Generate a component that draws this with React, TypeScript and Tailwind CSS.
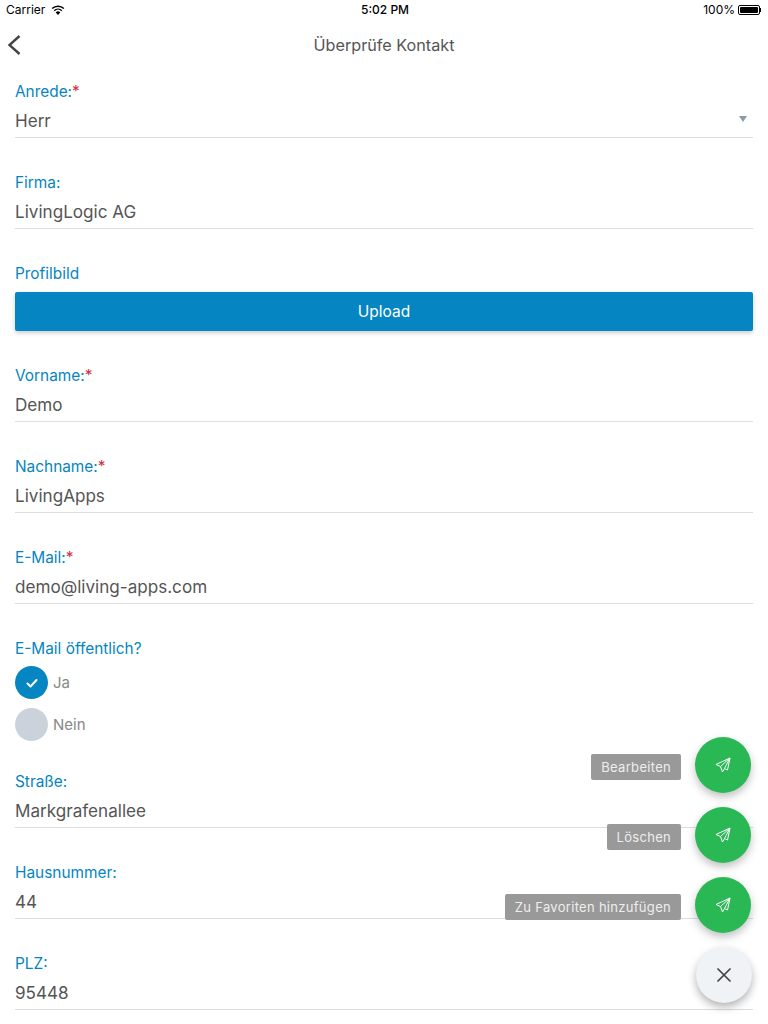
import { X } from 'lucide-react'

const font = { fontFamily: 'Inter, sans-serif' }

function Label({ text, required }: { text: string; required?: boolean }) {
  return (
    <div className="h-[20px] pt-[1px] text-[15.4px] leading-[20px] text-[#0585c1]">
      {text}
      {required && <span className="text-[#c8323c]">*</span>}
    </div>
  )
}

function Field({ label, value, required, select }: { label: string; value: string; required?: boolean; select?: boolean }) {
  return (
    <div className="h-[91px] pt-[11px]">
      <Label text={label} required={required} />
      <div className="flex h-[37px] items-center justify-between border-b border-[#dddddd] pt-[4px] text-[17.1px] text-[#555555]">
        <span>{value}</span>
        {select && <span className="mr-[6px] -mt-[4px] h-0 w-0 border-x-[4px] border-t-[6px] border-x-transparent border-t-[#8e99ab]" />}
      </div>
    </div>
  )
}

function Radio({ label, checked }: { label: string; checked?: boolean }) {
  return (
    <div className="flex h-[33px] items-center gap-[5px]">
      <div className={`flex h-[33px] w-[33px] items-center justify-center rounded-full ${checked ? 'bg-[#0585c1]' : 'bg-[#ccd2db]'}`}>
        {checked && (
          <svg width="14" height="14" viewBox="0 0 14 14" fill="none" stroke="#fff" strokeWidth="2" strokeLinecap="round" strokeLinejoin="round">
            <path d="M2.5 7.5 5.5 10.5 11.5 4" />
          </svg>
        )}
      </div>
      <span className="pt-[2px] text-[15px] text-[#888888]">{label}</span>
    </div>
  )
}

function PlaneIcon() {
  return (
    <svg width="16" height="16" viewBox="0 0 16 16" fill="none" stroke="#fff" strokeWidth="1" strokeLinejoin="round">
      <path d="M15 1 1 7.5 5.5 9.5 7.5 15 9.5 11.5 12.5 13Z" />
      <path d="M15 1 5.5 9.5M15 1 9.5 11.5" />
    </svg>
  )
}

function Fab({ label }: { label: string }) {
  return (
    <div className="flex h-[56px] items-center justify-end gap-[14px]">
      <span className="mt-[4px] flex h-[26px] items-center rounded-[2px] bg-[#999999] px-[10px] pt-[1px] text-[13px] tracking-[0.3px] text-[#eeeeee]">{label}</span>
      <div className="flex h-[56px] w-[56px] items-center justify-center rounded-full bg-[#2ab855] shadow-[0_4px_8px_rgba(0,0,0,0.25)]">
        <PlaneIcon />
      </div>
    </div>
  )
}

export default function App() {
  return (
    <div className="relative h-[1024px] w-[768px] overflow-hidden bg-white" style={font}>
      <div className="relative flex h-[20px] items-center justify-between pl-[6px] pr-[7px] text-[12px] text-black">
        <div className="flex items-center gap-[6px]">
          <span>Carrier</span>
          <svg width="14" height="10" viewBox="0 0 14 10" fill="black">
            <path d="M7 10 4.7 7.4a3.4 3.4 0 0 1 4.6 0Z" />
            <path d="M3.6 6.2a5 5 0 0 1 6.8 0l.9-1a6.4 6.4 0 0 0-8.6 0Z" />
            <path d="M1.6 4a8 8 0 0 1 10.8 0l1-1A9.4 9.4 0 0 0 .6 3Z" />
          </svg>
        </div>
        <span className="absolute left-[361px] font-medium">5:02 PM</span>
        <div className="flex items-center gap-[3px]">
          <span>100%</span>
          <div className="flex items-center">
            <div className="h-[10px] w-[22px] rounded-[2px] border border-black p-[1px]">
              <div className="h-full w-full rounded-[1px] bg-black" />
            </div>
            <div className="h-[4px] w-[1px] bg-black" />
          </div>
        </div>
      </div>

      <div className="relative flex h-[50px] items-center justify-center text-[16.2px] text-[#555555]">
        <svg width="30" height="30" viewBox="0 0 30 30" fill="none" stroke="#444444" strokeWidth="2.4" className="absolute left-0 top-[10px]">
          <path d="M19.5 6 9.5 15 19.5 24" />
        </svg>
        <span>Überprüfe Kontakt</span>
      </div>

      <div className="w-[768px] pl-[15px] pr-[15px]">
        <Field label="Anrede:" value="Herr" required select />
        <Field label="Firma:" value="LivingLogic AG" />
        <div className="h-[102px] pt-[11px]">
          <Label text="Profilbild" />
          <button type="button" className="mt-[9px] block h-[39px] w-full rounded-[2px] bg-[#0585c1] text-[15.5px] text-white shadow-[0_2px_4px_rgba(0,0,0,0.2)]">
            Upload
          </button>
        </div>
        <Field label="Vorname:" value="Demo" required />
        <Field label="Nachname:" value="LivingApps" required />
        <Field label="E-Mail:" value="demo@living-apps.com" required />
        <div className="h-[133px] pt-[11px]">
          <Label text="E-Mail öffentlich?" />
          <div className="mt-[8px] flex flex-col gap-[9px]">
            <Radio label="Ja" checked />
            <Radio label="Nein" />
          </div>
        </div>
        <Field label="Straße:" value="Markgrafenallee" />
        <Field label="Hausnummer:" value="44" />
        <Field label="PLZ:" value="95448" />
      </div>

      <div className="absolute right-[17px] top-[737px] flex flex-col items-end gap-[14px]">
        <Fab label="Bearbeiten" />
        <Fab label="Löschen" />
        <Fab label="Zu Favoriten hinzufügen" />
        <div className="-mr-[1px] flex h-[56px] w-[56px] items-center justify-center rounded-full bg-[#f0f3f6] shadow-[0_4px_8px_rgba(0,0,0,0.3)]">
          <X size={24} strokeWidth={1.7} className="text-[#444444]" />
        </div>
      </div>
    </div>
  )
}
